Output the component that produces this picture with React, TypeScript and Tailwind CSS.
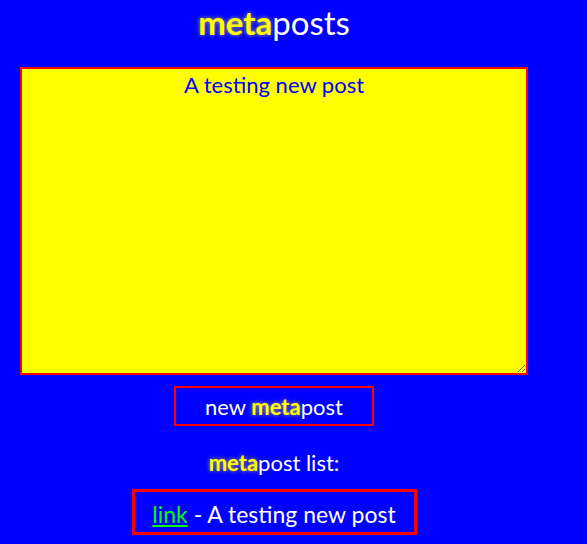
import React, { useState } from 'react';

const Meta: React.FC = () => (
  <span className="font-bold text-[#ffff00] [text-shadow:0_0_4px_rgba(255,255,0,0.7)]">meta</span>
);

const App: React.FC = () => {
  const [text, setText] = useState('A testing new post');

  return (
    <div className="min-h-[544px] w-full bg-[#0000ff] font-['Lato','Liberation_Sans',sans-serif] text-white">
      <div className="flex w-[548px] flex-col items-center">
        <h1 className="mt-[2px] text-[33px] leading-[40px]">
          <Meta />posts
        </h1>

        <textarea
          value={text}
          onChange={(e) => setText(e.target.value)}
          className="mt-[25px] h-[308px] w-[508px] resize border-2 border-[#ff0000] bg-[#ffff00] px-2 pt-[2px] text-center text-[22px] leading-[28px] text-[#0000ff] outline-none"
        />

        <button className="mt-[11px] h-[40px] w-[200px] border-2 border-[#ff0000] text-[22px] text-white">
          new <Meta />post
        </button>

        <p className="mt-[23px] text-[22px] leading-[28px]">
          <Meta />post list:
        </p>

        <div className="mt-[12px] flex h-[46px] w-[285px] items-center justify-center border-[3px] border-[#ff0000] pt-[5px] text-[23px]">
          <a href="#" className="text-[#00ff00] underline">link</a>
          <span>&nbsp;- A testing new post</span>
        </div>
      </div>
    </div>
  );
};

export default App;
